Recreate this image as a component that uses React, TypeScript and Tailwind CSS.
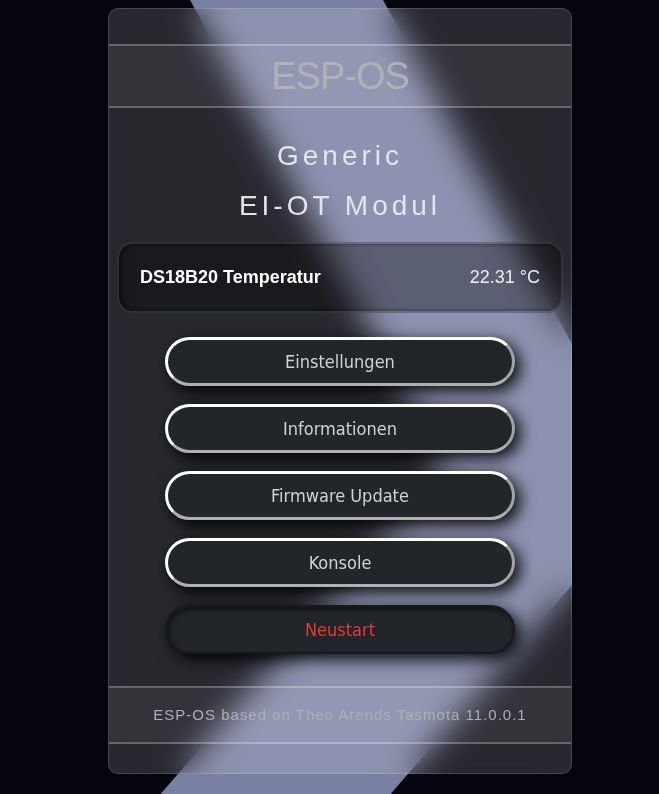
import React from 'react';

const buttons = ['Einstellungen', 'Informationen', 'Firmware Update', 'Konsole'];

export default function App() {
  return (
    <div className="relative min-h-screen overflow-hidden bg-[#05050d] pt-2 font-['Liberation_Sans',Arial,sans-serif]">
      {/* background ribbon */}
      <svg className="absolute inset-0 h-full w-full" viewBox="0 0 659 794" preserveAspectRatio="none">
        <polygon
          points="179,-20 372,-20 572,344 572,585 368,820 138,820 446,465"
          fill="#7a80a2"
        />
      </svg>

      <div className="relative z-10 ml-[108px] w-[464px] overflow-hidden rounded-[10px] border border-white/15 bg-white/[0.14] pt-[35px] pb-[29px] backdrop-blur-lg">
        {/* header */}
        <div className="flex h-[64px] items-center justify-center border-y-2 border-white/25 bg-white/[0.05]">
          <span className="text-[38px] tracking-[-1px] text-[#b2b2b6]">ESP-OS</span>
        </div>

        {/* device name */}
        <div className="mt-[23px] text-center text-[28px] leading-[50px] tracking-[4px] text-[#e4e4ea]">
          <div>Generic</div>
          <div>EI-OT Modul</div>
        </div>

        {/* sensor */}
        <div className="mx-2 mt-[11px] flex h-[71px] items-center justify-between rounded-2xl border-2 border-white/10 bg-black/35 px-[21px] text-[18px] text-white shadow-[inset_3px_0_4px_rgba(0,0,0,0.5)]">
          <span className="font-bold">DS18B20 Temperatur</span>
          <span className="text-[#ececf0]">22.31 °C</span>
        </div>

        {/* menu */}
        <div className="mt-6 flex flex-col items-center gap-[18px] font-['DejaVu_Sans_Condensed','DejaVu_Sans',sans-serif] text-[18px]">
          {buttons.map((b) => (
            <button
              key={b}
              className="h-[49px] w-[350px] rounded-full border-[3px] border-t-white border-l-white border-r-[#a4a4a4] border-b-[#b0b0b0] bg-[#222529] text-[#d2d2d2] shadow-[5px_5px_16px_rgba(0,0,0,0.95)]"
            >
              {b}
            </button>
          ))}
          <button className="h-[49px] w-[350px] rounded-full border-2 border-[#18191c] bg-[#222529] text-[#e5393a] shadow-[5px_5px_16px_rgba(0,0,0,0.95),inset_2px_3px_4px_rgba(0,0,0,0.5)]">
            Neustart
          </button>
        </div>

        {/* footer */}
        <div className="mt-8 flex h-[58px] items-center justify-center border-y-2 border-white/25 bg-white/[0.05] text-[15px] tracking-[1px] text-[#aeaeb6]">
          ESP-OS based on Theo Arends Tasmota 11.0.0.1
        </div>
      </div>
    </div>
  );
}
